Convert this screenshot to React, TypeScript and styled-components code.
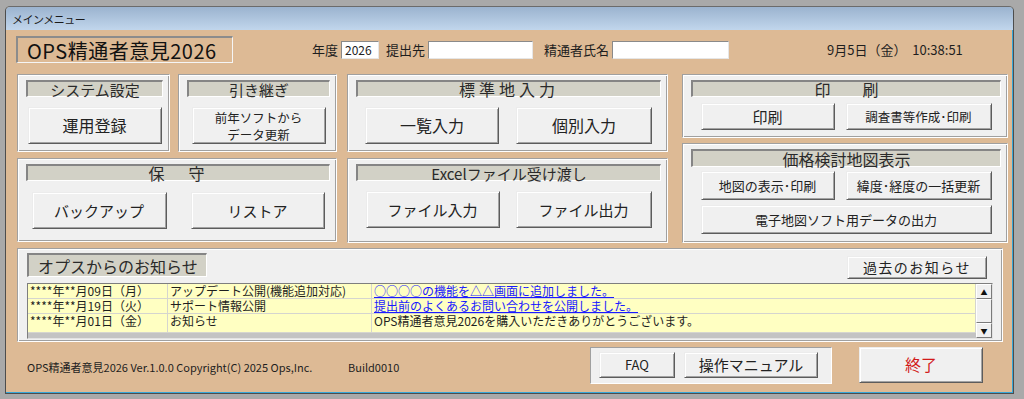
import styled, { createGlobalStyle } from "styled-components";

const GlobalStyle = createGlobalStyle`
  html, body {
    margin: 0;
    padding: 0;
  }
  body {
    background: #a9a9a9;
    font-family: "Noto Sans CJK JP", "Noto Sans", sans-serif;
    color: #1e1e1e;
  }
`;

const notices = [
  { date: "****年**月09日（月）", title: "アップデート公開(機能追加対応)", body: "○○○○の機能を△△画面に追加しました。", link: true, h: 15 },
  { date: "****年**月19日（火）", title: "サポート情報公開", body: "提出前のよくあるお問い合わせを公開しました。", link: true, h: 15 },
  { date: "****年**月01日（金）", title: "お知らせ", body: "OPS精通者意見2026を購入いただきありがとうございます。", link: false, h: 19 },
];

const App = () => {
  return (
    <Screen>
      <GlobalStyle />
      <Window>
        <TitleBar>メインメニュー</TitleBar>
        <Content>
          <HeaderRow>
            <AppTitle>OPS精通者意見2026</AppTitle>
            <Label ml={79}>年度</Label>
            <TextBox w={38}>2026</TextBox>
            <Label ml={7}>提出先</Label>
            <TextBox w={105} />
            <Label ml={11}>精通者氏名</Label>
            <TextBox w={117} />
            <DateText>9月5日（金）&nbsp;&nbsp;10:38:51</DateText>
          </HeaderRow>

          <TopArea>
            <Column w={320} gap={6}>
              <PanelRow>
                <Panel w={153} h={78}>
                  <SectionBar>システム設定</SectionBar>
                  <ButtonRow mt={10} gap={0}>
                    <Button w={134} h={37} fs={16}>運用登録</Button>
                  </ButtonRow>
                </Panel>
                <Panel w={159} h={78}>
                  <SectionBar>引き継ぎ</SectionBar>
                  <ButtonRow mt={10} gap={0}>
                    <Button w={134} h={37} fs={12.5} lh={17}>
                      前年ソフトから
                      <br />
                      データ更新
                    </Button>
                  </ButtonRow>
                </Panel>
              </PanelRow>
              <Panel h={84}>
                <SectionBar fs={16} ls={4}>保　守</SectionBar>
                <ButtonRow mt={11} gap={24}>
                  <Button w={135} h={37} fs={15}>バックアップ</Button>
                  <Button w={134} h={37} fs={15}>リストア</Button>
                </ButtonRow>
              </Panel>
            </Column>

            <Column w={321} gap={6} ml={10}>
              <Panel h={78}>
                <SectionBar fs={16} ls={4}>標準地入力</SectionBar>
                <ButtonRow mt={10} gap={17}>
                  <Button w={134} h={37} fs={16}>一覧入力</Button>
                  <Button w={136} h={37} fs={16}>個別入力</Button>
                </ButtonRow>
              </Panel>
              <Panel h={85}>
                <SectionBar>Excelファイル受け渡し</SectionBar>
                <ButtonRow mt={10} gap={16}>
                  <Button w={134} h={37} fs={15}>ファイル入力</Button>
                  <Button w={136} h={37} fs={15}>ファイル出力</Button>
                </ButtonRow>
              </Panel>
            </Column>

            <Column w={326} gap={5} ml={14}>
              <Panel h={64}>
                <SectionBar fs={16}>印　　刷</SectionBar>
                <ButtonGrid mt={6}>
                  <Button w={134} h={27} fs={15}>印刷</Button>
                  <Button w={146} h={27} fs={12.5}>調査書等作成･印刷</Button>
                </ButtonGrid>
              </Panel>
              <Panel h={100}>
                <SectionBar h={18} fs={16}>価格検討地図表示</SectionBar>
                <ButtonGrid mt={4}>
                  <Button w={134} h={29} fs={13}>地図の表示･印刷</Button>
                  <Button w={146} h={29} fs={13}>緯度･経度の一括更新</Button>
                  <WideButton h={29} fs={13}>電子地図ソフト用データの出力</WideButton>
                </ButtonGrid>
              </Panel>
            </Column>
          </TopArea>

          <NoticePanel>
            <NoticeTop>
              <NoticeBar>オプスからのお知らせ</NoticeBar>
              <Button w={140} h={23} fs={14} ls={1.5} mt={3}>過去のお知らせ</Button>
            </NoticeTop>
            <NoticeTable>
              <Rows>
                {notices.map((n) => (
                  <Row key={n.date} h={n.h}>
                    <Cell>{n.date}</Cell>
                    <Cell>{n.title}</Cell>
                    <Cell link={n.link}>{n.body}</Cell>
                  </Row>
                ))}
              </Rows>
              <ScrollBar>
                <ScrollButton>▲</ScrollButton>
                <ScrollThumb />
                <ScrollButton>▼</ScrollButton>
              </ScrollBar>
            </NoticeTable>
          </NoticePanel>

          <Footer>
            <Copyright>OPS精通者意見2026 Ver.1.0.0 Copyright(C) 2025 Ops,Inc.</Copyright>
            <Build>Build0010</Build>
            <GroupBox>
              <Button w={76} h={26} fs={13}>FAQ</Button>
              <Button w={134} h={26} fs={15}>操作マニュアル</Button>
            </GroupBox>
            <Button w={124} h={36} fs={16} color="#d21a1a" mr={30}>終了</Button>
          </Footer>
        </Content>
      </Window>
    </Screen>
  );
};

export default App;

const Screen = styled.div`
  width: 1024px;
  height: 399px;
  box-sizing: border-box;
  padding: 6px 0 0 5px;
  overflow: hidden;
`;

const Window = styled.div`
  width: 1009px;
  height: 388px;
  box-sizing: border-box;
  border: 1px solid #4d4d4d;
  border-top-color: #6b6b6b;
  border-radius: 5px 5px 0 0;
  background: #ddba95;
  box-shadow: inset -1px -1px 0 #35a6d8;
  display: flex;
  flex-direction: column;
  overflow: hidden;
`;

const TitleBar = styled.div`
  height: 23px;
  flex-shrink: 0;
  display: flex;
  align-items: center;
  padding-left: 6px;
  font-size: 11px;
  letter-spacing: -0.5px;
  color: #1a1a1a;
  background: linear-gradient(#9bb3cf, #c1d6ec);
`;

const Content = styled.div`
  flex: 1;
  display: flex;
  flex-direction: column;
  padding: 6px 0 0 11px;
`;

const HeaderRow = styled.div`
  display: flex;
  align-items: center;
  height: 27px;
  margin-left: -1px;
`;

const AppTitle = styled.div`
  width: 217px;
  height: 27px;
  box-sizing: border-box;
  border-style: solid;
  border-width: 2px 1px 1px 2px;
  border-color: #8c8c8c #f5f5f5 #f5f5f5 #8c8c8c;
  padding-left: 9px;
  display: flex;
  align-items: center;
  font-size: 20px;
  letter-spacing: 0.5px;
  color: #111;
`;

const Label = styled.span<{ ml: number }>`
  margin-left: ${({ ml }) => ml}px;
  margin-right: 3px;
  font-size: 13px;
  color: #1e1e1e;
`;

const TextBox = styled.div<{ w: number }>`
  width: ${({ w }) => w}px;
  height: 18px;
  box-sizing: border-box;
  background: #fff;
  border-style: solid;
  border-width: 1px;
  border-color: #8a8a8a #e6e6e6 #e6e6e6 #8a8a8a;
  font-size: 12px;
  line-height: 16px;
  padding-left: 3px;
  color: #222;
`;

const DateText = styled.span`
  margin-left: 98px;
  font-size: 13px;
  color: #1e1e1e;
`;

const TopArea = styled.div`
  display: flex;
  align-items: flex-start;
  margin-top: 11px;
`;

const Column = styled.div<{ w: number; gap: number; ml?: number }>`
  width: ${({ w }) => w}px;
  margin-left: ${({ ml }) => ml ?? 0}px;
  display: flex;
  flex-direction: column;
  gap: ${({ gap }) => gap}px;
`;

const PanelRow = styled.div`
  display: flex;
  gap: 8px;
`;

const Panel = styled.div<{ w?: number; h: number }>`
  width: ${({ w }) => (w ? `${w}px` : "100%")};
  height: ${({ h }) => h}px;
  box-sizing: border-box;
  background: #f0f0f0;
  border-style: solid;
  border-width: 1px;
  border-color: #a0a0a0 #ffffff #ffffff #a0a0a0;
  box-shadow: inset 1px 1px 0 #ffffff, inset -1px -1px 0 #a0a0a0;
  padding: 5px 6px 0 8px;
  display: flex;
  flex-direction: column;
`;

const SectionBar = styled.div<{ h?: number; fs?: number; ls?: number }>`
  height: ${({ h }) => h ?? 17}px;
  box-sizing: border-box;
  flex-shrink: 0;
  background: #d2d1c6;
  border-style: solid;
  border-width: 2px 1px 1px 2px;
  border-color: #858585 #ffffff #ffffff #858585;
  display: flex;
  align-items: center;
  justify-content: center;
  font-size: ${({ fs }) => fs ?? 15}px;
  letter-spacing: ${({ ls }) => ls ?? 0}px;
  color: #2a2a2a;
  white-space: nowrap;
`;

const ButtonRow = styled.div<{ mt: number; gap: number }>`
  display: flex;
  justify-content: center;
  gap: ${({ gap }) => gap}px;
  margin-top: ${({ mt }) => mt}px;
`;

const ButtonGrid = styled.div<{ mt: number }>`
  display: grid;
  grid-template-columns: 134px 146px;
  justify-content: center;
  column-gap: 11px;
  row-gap: 5px;
  margin-top: ${({ mt }) => mt}px;
`;

const Button = styled.button<{
  w: number;
  h: number;
  fs: number;
  lh?: number;
  ls?: number;
  mt?: number;
  mr?: number;
  color?: string;
}>`
  width: ${({ w }) => w}px;
  height: ${({ h }) => h}px;
  margin-top: ${({ mt }) => mt ?? 0}px;
  margin-right: ${({ mr }) => mr ?? 0}px;
  box-sizing: border-box;
  padding: 0;
  background: #f0f0f0;
  border-style: solid;
  border-width: 1px;
  border-color: #ececec #5c5c5c #5c5c5c #ececec;
  box-shadow: inset 1px 1px 0 #ffffff, inset -1px -1px 0 #a3a3a3;
  font-family: "Noto Sans CJK JP", "Noto Sans", sans-serif;
  font-size: ${({ fs }) => fs}px;
  line-height: ${({ lh }) => (lh ? `${lh}px` : "1.2")};
  letter-spacing: ${({ ls }) => ls ?? 0}px;
  color: ${({ color }) => color ?? "#222"};
  white-space: nowrap;
  flex-shrink: 0;
`;

const WideButton = styled(Button).attrs({ w: 291 })`
  grid-column: 1 / 3;
`;

const NoticePanel = styled.div`
  width: 986px;
  height: 94px;
  margin-top: 5px;
  box-sizing: border-box;
  background: #f0f0f0;
  border-style: solid;
  border-width: 1px;
  border-color: #a0a0a0 #ffffff #ffffff #a0a0a0;
  box-shadow: inset 1px 1px 0 #ffffff, inset -1px -1px 0 #a0a0a0;
  padding: 4px 9px 0 9px;
  display: flex;
  flex-direction: column;
`;

const NoticeTop = styled.div`
  display: flex;
  justify-content: space-between;
  align-items: flex-start;
  height: 26px;
  padding-right: 6px;
`;

const NoticeBar = styled.div`
  width: 180px;
  height: 24px;
  box-sizing: border-box;
  background: #d2d1c6;
  border-style: solid;
  border-width: 2px 1px 1px 2px;
  border-color: #858585 #ffffff #ffffff #858585;
  padding-left: 9px;
  display: flex;
  align-items: center;
  font-size: 16px;
  color: #2a2a2a;
`;

const NoticeTable = styled.div`
  margin-top: 4px;
  height: 56px;
  box-sizing: border-box;
  display: flex;
  border-style: solid;
  border-width: 1px;
  border-color: #7e7e7e #e2e2e2 #e2e2e2 #7e7e7e;
`;

const Rows = styled.div`
  flex: 1;
  display: flex;
  flex-direction: column;
  background: #c3c3c3;
`;

const Row = styled.div<{ h: number }>`
  display: grid;
  grid-template-columns: 140px 204px 1fr;
  height: ${({ h }) => h}px;
  box-sizing: border-box;
  background: #ffffc2;
  border-bottom: 1px solid #d5d5cf;
`;

const Cell = styled.div<{ link?: boolean }>`
  border-right: 1px solid #d5d5cf;
  padding-left: 2px;
  font-size: 12px;
  line-height: 14px;
  white-space: nowrap;
  color: ${({ link }) => (link ? "#1a1aff" : "#1e1e1e")};
  text-decoration: ${({ link }) => (link ? "underline" : "none")};
`;

const ScrollBar = styled.div`
  width: 16px;
  display: flex;
  flex-direction: column;
  background: #f0f0f0;
`;

const ScrollButton = styled.div`
  height: 15px;
  box-sizing: border-box;
  border-style: solid;
  border-width: 1px;
  border-color: #ffffff #7a7a7a #7a7a7a #ffffff;
  display: flex;
  align-items: center;
  justify-content: center;
  font-size: 7px;
  color: #111;
`;

const ScrollThumb = styled.div`
  flex: 1;
  box-sizing: border-box;
  border-style: solid;
  border-width: 1px;
  border-color: #ffffff #7a7a7a #7a7a7a #ffffff;
`;

const Footer = styled.div`
  display: flex;
  align-items: flex-start;
  margin-top: 5px;
`;

const Copyright = styled.span`
  width: 321px;
  margin-left: 10px;
  margin-top: 12px;
  font-size: 11px;
  white-space: nowrap;
  color: #1e1e1e;
`;

const Build = styled.span`
  margin-top: 12px;
  font-size: 11px;
  color: #1e1e1e;
`;

const GroupBox = styled.div`
  margin-left: auto;
  margin-right: 27px;
  height: 37px;
  box-sizing: border-box;
  background: #f0f0f0;
  border-style: solid;
  border-width: 1px;
  border-color: #a0a0a0 #ffffff #ffffff #a0a0a0;
  padding: 4px 13px 0 8px;
  display: flex;
  gap: 9px;
`;
